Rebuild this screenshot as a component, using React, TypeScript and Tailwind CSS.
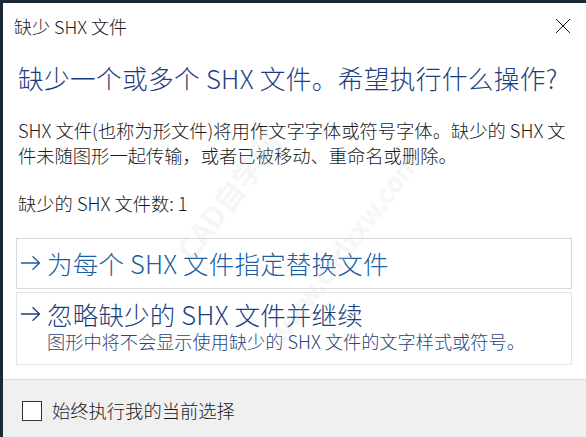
import React, { useState } from 'react';

const FONT = { fontFamily: '"Noto Sans CJK SC", "Noto Sans", sans-serif' };

function CloseIcon(): JSX.Element {
  return (
    <svg width="16" height="16" viewBox="0 0 16 16" fill="none" stroke="#1a1a1a" strokeWidth={1}>
      <path d="M1 1 L15 15 M15 1 L1 15" />
    </svg>
  );
}

function Arrow(): JSX.Element {
  return (
    <svg width="21" height="16" viewBox="0 0 21 16" fill="none" stroke="currentColor" strokeWidth={1.4} strokeLinecap="round" strokeLinejoin="round">
      <path d="M1.5 8 H19.5 M13 1.8 L19.5 8 L13 14.2" />
    </svg>
  );
}

export default function App(): JSX.Element {
  const [always, setAlways] = useState(false);

  return (
    <div
      className="relative w-[586px] h-[437px] overflow-hidden bg-white border-l-[3px] border-t-[3px] border-[#1b2836] flex flex-col font-light text-[#1a1a1a]"
      style={FONT}
    >
      {/* Title bar */}
      <div className="h-[46px] flex items-center justify-between pl-[11px] pr-[15px]">
        <span className="text-[18px] leading-none">缺少 SHX 文件</span>
        <CloseIcon />
      </div>

      {/* Main instruction */}
      <div className="mt-[14px] pl-[15px] text-[25.7px] leading-[30px] text-[#1e3d80] tracking-[0.3px]">
        缺少一个或多个 SHX 文件。希望执行什么操作?
      </div>

      {/* Content */}
      <div className="mt-[25px] pl-[15px] pr-[4px] text-[18.3px] leading-[25px]">
        SHX 文件(也称为形文件)将用作文字字体或符号字体。缺少的 SHX 文件未随图形一起传输，或者已被移动、重命名或删除。
      </div>
      <div className="mt-[23px] pl-[15px] text-[18.3px] leading-[25px]">缺少的 SHX 文件数: 1</div>

      {/* Command links */}
      <div className="mt-[22px] ml-[13px] mr-[14px] flex flex-col gap-[3px]">
        <button className="h-[51px] border border-[#d6dade] flex items-center pl-[3px] pb-[2px] text-left text-[#1b5fa3]">
          <Arrow />
          <span className="ml-[6px] text-[25.5px] leading-[30px] tracking-[0.2px]">为每个 SHX 文件指定替换文件</span>
        </button>
        <button className="h-[73px] border border-[#e3e5e8] flex flex-col items-start pl-[3px] pt-[6px] text-left text-[#1c3f7e]">
          <div className="flex items-center">
            <Arrow />
            <span className="ml-[6px] text-[25.5px] leading-[30px] tracking-[0.2px]">忽略缺少的 SHX 文件并继续</span>
          </div>
          <span className="ml-[27px] text-[18.2px] leading-[24px] text-[#2a4677]">
            图形中将不会显示使用缺少的 SHX 文件的文字样式或符号。
          </span>
        </button>
      </div>

      {/* Footer */}
      <div className="mt-auto h-[58px] bg-[#f0f0f0] border-t border-[#dcdcdc] flex items-center pl-[19px] pt-[4px]">
        <button
          onClick={() => setAlways(!always)}
          className="w-[20px] h-[20px] border-[1.5px] border-[#333333] bg-white flex items-center justify-center"
        >
          {always && (
            <svg width="14" height="14" viewBox="0 0 14 14" fill="none" stroke="#222" strokeWidth={1.6}>
              <path d="M2 7 L5.5 10.5 L12 3" />
            </svg>
          )}
        </button>
        <span className="ml-[10px] text-[18.3px] leading-none">始终执行我的当前选择</span>
      </div>

      {/* Watermark */}
      <span className="pointer-events-none absolute left-[150px] top-[170px] -rotate-[53deg] text-[30px] font-bold text-[#d8dde2] opacity-25 whitespace-nowrap">
        CAD自学网
      </span>
      <span className="pointer-events-none absolute left-[225px] top-[225px] -rotate-[53deg] text-[26px] font-bold text-[#d8dde2] opacity-25 whitespace-nowrap">
        www.cadzxw.com
      </span>
    </div>
  );
}
